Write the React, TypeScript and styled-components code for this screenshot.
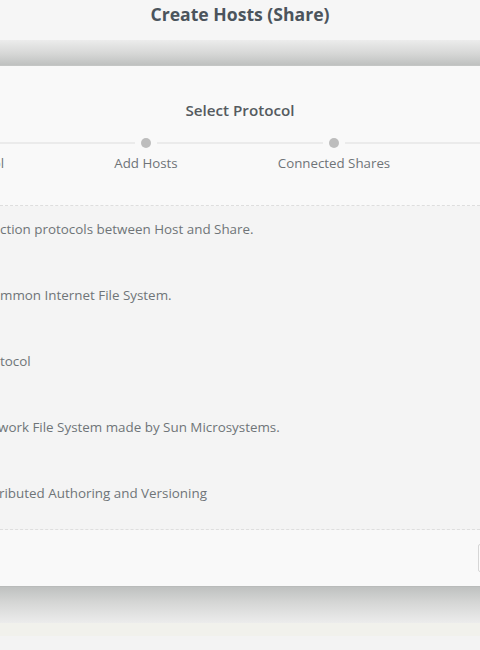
import React from 'react';
import styled, { createGlobalStyle } from 'styled-components';

const GlobalStyle = createGlobalStyle`
  html, body {
    margin: 0;
    padding: 0;
    background: #f3f3f3;
  }
  body {
    font-family: "Open Sans", "Noto Sans", "DejaVu Sans", sans-serif;
    overflow: hidden;
  }
`;

const Page = styled.div`
  width: 480px;
  height: 650px;
  display: flex;
  flex-direction: column;
  overflow: hidden;
  background: #f3f3f3;
`;

const TitleBar = styled.header`
  height: 40px;
  display: flex;
  justify-content: center;
  align-items: flex-start;
  padding-top: 1px;
  box-sizing: border-box;
  background: #f6f6f6;
`;

const Title = styled.h1`
  margin: 0;
  font-size: 17.6px;
  line-height: 26px;
  font-weight: 700;
  color: #4b545c;
`;

const Shade = styled.div<{ $flip?: boolean }>`
  height: ${(p) => (p.$flip ? 36 : 25)}px;
  background: linear-gradient(
    ${(p) => (p.$flip ? '180deg' : '0deg')},
    #bfc1c0 0%,
    #d6d7d6 45%,
    #ececec 100%
  );
`;

const Band = styled.div`
  height: 13px;
  background: #f1f1ec;
`;

const Modal = styled.section`
  display: flex;
  flex-direction: column;
  background: #f9f9f9;
  border-top: 1px solid #c4c6c5;
  border-bottom: 1px solid #b9bbba;
`;

const ModalHead = styled.div`
  height: 140px;
  box-sizing: border-box;
  padding-top: 33px;
  display: flex;
  flex-direction: column;
  align-items: center;
  border-bottom: 1px dashed #dedede;
`;

const StepTitle = styled.h2`
  margin: 0;
  font-size: 15.2px;
  line-height: 22px;
  font-weight: 600;
  color: #555b60;
`;

const Stepper = styled.ol`
  list-style: none;
  margin: 17px 0 0 -136px;
  padding: 0;
  display: flex;
  align-self: flex-start;
`;

const Step = styled.li`
  width: 188px;
  display: flex;
  flex-direction: column;
  align-items: center;
  gap: 6px;
`;

const Track = styled.div`
  width: 100%;
  height: 10px;
  display: flex;
  align-items: center;
  gap: 6px;
`;

const Rail = styled.span<{ $hidden?: boolean }>`
  flex: 1;
  height: 2px;
  background: ${(p) => (p.$hidden ? 'transparent' : '#ebebeb')};
`;

const Tail = styled.li`
  width: 120px;
  height: 10px;
  display: flex;
  align-items: center;
  &::before {
    content: '';
    flex: 1;
    height: 2px;
    background: #ebebeb;
  }
`;

const Dot = styled.span`
  width: 10px;
  height: 10px;
  border-radius: 50%;
  background: #bdbdbd;
`;

const StepLabel = styled.span`
  font-size: 13.3px;
  line-height: 18px;
  color: #6f7478;
  white-space: nowrap;
`;

const Body = styled.div`
  background: #f4f4f4;
  padding: 13px 0 26px;
  display: flex;
  flex-direction: column;
  gap: 46px;
  border-bottom: 1px dashed #dedede;
`;

const Line = styled.p<{ $shift?: number }>`
  margin: 0 0 0 ${(p) => -(p.$shift ?? 0)}px;
  font-size: 13.4px;
  line-height: 20px;
  color: #6f7478;
  white-space: nowrap;
`;

const Footer = styled.div`
  height: 56px;
  display: flex;
  justify-content: flex-end;
  align-items: center;
`;

const NextButton = styled.button`
  width: 60px;
  height: 28px;
  margin-right: -58px;
  border: 1px solid #d6d6d6;
  border-radius: 2px;
  background: #fbfbfb;
`;

const steps = ['Select Protocol', 'Add Hosts', 'Connected Shares'];

const lines: { text: string; shift?: number }[] = [
  { text: 'ction protocols between Host and Share.' },
  { text: 'mmon Internet File System.' },
  { text: 'tocol' },
  { text: 'work File System made by Sun Microsystems.', shift: 2 },
  { text: 'ributed Authoring and Versioning', shift: 1 },
];

const App: React.FC = () => {
  return (
    <>
      <GlobalStyle />
      <Page>
        <TitleBar>
          <Title>Create Hosts (Share)</Title>
        </TitleBar>
        <Shade />
        <Modal>
          <ModalHead>
            <StepTitle>Select Protocol</StepTitle>
            <Stepper>
              {steps.map((s, i) => (
                <Step key={s}>
                  <Track>
                    <Rail $hidden={i === 0} />
                    <Dot />
                    <Rail />
                  </Track>
                  <StepLabel>{s}</StepLabel>
                </Step>
              ))}
              <Tail aria-hidden />
            </Stepper>
          </ModalHead>
          <Body>
            {lines.map((l) => (
              <Line key={l.text} $shift={l.shift}>
                {l.text}
              </Line>
            ))}
          </Body>
          <Footer>
            <NextButton aria-label="Next" />
          </Footer>
        </Modal>
        <Shade $flip />
        <Band />
      </Page>
    </>
  );
};

export default App;
